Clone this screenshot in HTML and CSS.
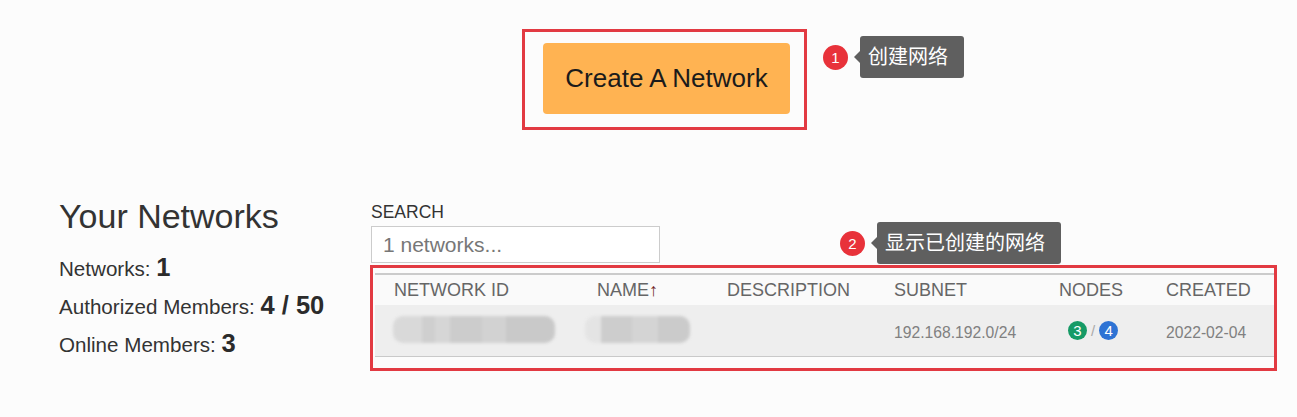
FILE: index.html
```html
<!DOCTYPE html>
<html lang="zh-CN">
<head>
  <meta charset="UTF-8" />
  <title>Networks</title>
  <meta name="viewport" content="width=device-width, initial-scale=1" />
  <link rel="stylesheet" href="styles.css">
</head>
<body>
  <div class="top">
    <div class="mark mark-create">
      <button class="create-btn" type="button">Create A Network</button>
      <div class="callout callout-1">
        <span class="step">1</span>
        <span class="tip">创建网络</span>
      </div>
    </div>
  </div>

  <div class="main">
    <div class="summary">
      <h1 class="title">Your Networks</h1>
      <p class="stat">Networks: <b>1</b></p>
      <p class="stat">Authorized Members: <b>4 / 50</b></p>
      <p class="stat">Online Members: <b>3</b></p>
    </div>

    <div class="list">
      <label class="search-label" for="search">SEARCH</label>
      <input id="search" class="search" type="text" placeholder="1 networks...">

      <div class="mark mark-table">
        <div class="callout callout-2">
          <span class="step">2</span>
          <span class="tip">显示已创建的网络</span>
        </div>

        <div class="net-table">
          <div class="row head">
            <div class="cell">NETWORK ID</div>
            <div class="cell">NAME<span class="sort">↑</span></div>
            <div class="cell">DESCRIPTION</div>
            <div class="cell">SUBNET</div>
            <div class="cell">NODES</div>
            <div class="cell">CREATED</div>
          </div>
          <div class="row data">
            <div class="cell"><span class="blur blur-id"></span></div>
            <div class="cell"><span class="blur blur-name"></span></div>
            <div class="cell"></div>
            <div class="cell">192.168.192.0/24</div>
            <div class="cell nodes">
              <span class="dot online">3</span>
              <span class="sep">/</span>
              <span class="dot total">4</span>
            </div>
            <div class="cell">2022-02-04</div>
          </div>
        </div>
      </div>
    </div>
  </div>
</body>
</html>
```

FILE: styles.css
```css
* { box-sizing: border-box; }
body {
  margin: 0;
  background: #fcfcfc;
  color: #333;
  font-family: "Liberation Sans", Arial, "Noto Sans CJK SC", sans-serif;
}

/* highlight boxes */
.mark {
  position: relative;
  border: 3px solid #e23a42;
}

.top {
  display: flex;
  padding: 29px 0 0 522px;
}
.mark-create {
  padding: 11px 14px 13px 18px;
}
.create-btn {
  display: block;
  width: 247px;
  height: 71px;
  border: none;
  border-radius: 4px;
  background: #ffb352;
  color: #1b1b1b;
  font-family: inherit;
  font-size: 26px;
  cursor: pointer;
}

/* annotations */
.callout {
  position: absolute;
  display: flex;
  align-items: center;
  gap: 12px;
  white-space: nowrap;
}
.callout-1 { left: 298px; top: 4px; }
.callout-2 { left: 467px; top: -46px; }
.step {
  width: 25px;
  height: 25px;
  border-radius: 50%;
  background: #e8323a;
  color: #fff;
  font-size: 15px;
  line-height: 25px;
  text-align: center;
}
.tip {
  position: relative;
  height: 42px;
  padding: 0 16px 0 8px;
  border-radius: 3px;
  background: #5f5f5f;
  color: #fff;
  font-size: 20px;
  line-height: 42px;
}
.tip::before {
  content: "";
  position: absolute;
  left: -6px;
  top: 15px;
  border-style: solid;
  border-width: 6px 6px 6px 0;
  border-color: transparent #5f5f5f transparent transparent;
}

/* main part */
.main {
  display: flex;
  align-items: flex-start;
  margin-top: 68px;
}
.summary {
  flex: 0 0 370px;
  padding-left: 59px;
}
.title {
  margin: 0 0 14px;
  font-size: 34px;
  font-weight: 400;
  line-height: 37px;
  color: #333;
}
.stat {
  margin: 0;
  font-size: 20.6px;
  line-height: 37px;
  color: #333;
}
.stat b {
  font-size: 25.5px;
  color: #2b2b2b;
}

.list {
  flex: 0 0 907px;
  padding-top: 4px;
}
.search-label {
  display: block;
  margin-left: 1px;
  font-size: 17.5px;
  line-height: 20px;
  color: #333;
}
.search {
  display: block;
  width: 289px;
  height: 37px;
  margin: 4px 0 2px 1px;
  padding: 0 11px;
  border: 1px solid #ccc;
  background: #fff;
  font-family: inherit;
  font-size: 21px;
  color: #333;
}
.search::placeholder { color: #777; }

.mark-table {
  padding: 5px 0 11px 2px;
}
.net-table {
  border-top: 2px solid #cbcbcb;
}
.row {
  display: grid;
  grid-template-columns: 203px 130px 167px 165px 107px 1fr;
}
.cell {
  padding-left: 19px;
  white-space: nowrap;
}
.head {
  height: 30px;
  background: #fafafa;
  font-size: 18px;
  line-height: 30px;
  color: #666;
}
.sort { color: #6e2222; }
.data {
  height: 52px;
  padding-top: 4px;
  background: #eeeeee;
  border-bottom: 1px solid #c9c9c9;
  font-size: 15.7px;
  line-height: 47px;
  color: #808080;
}

/* masked values */
.blur {
  display: inline-block;
  height: 27px;
  vertical-align: middle;
  margin-top: -9px;
  border-radius: 10px;
  filter: blur(1.5px);
}
.blur-id {
  width: 162px;
  margin-left: -1px;
  background: linear-gradient(90deg, #d9d9d9 0 18%, #cfcfcf 18% 26%, #d6d6d6 26% 35%, #cccccc 35% 55%, #d2d2d2 55% 70%, #c9c9c9 70% 100%);
}
.blur-name {
  width: 105px;
  margin-left: -12px;
  background: linear-gradient(90deg, #e4e4e4 0 15%, #cdcdcd 15% 45%, #d4d4d4 45% 70%, #cbcbcb 70% 100%);
}

.nodes {
  display: flex;
  align-items: center;
  gap: 4px;
  padding-left: 28px;
  margin-top: -4px;
}
.dot {
  width: 19px;
  height: 19px;
  border-radius: 50%;
  color: #fff;
  font-size: 15px;
  line-height: 19px;
  text-align: center;
}
.online { background: #169a66; }
.total { background: #2e73d4; }
.sep { color: #aaa; font-size: 15px; line-height: 19px; }
```
